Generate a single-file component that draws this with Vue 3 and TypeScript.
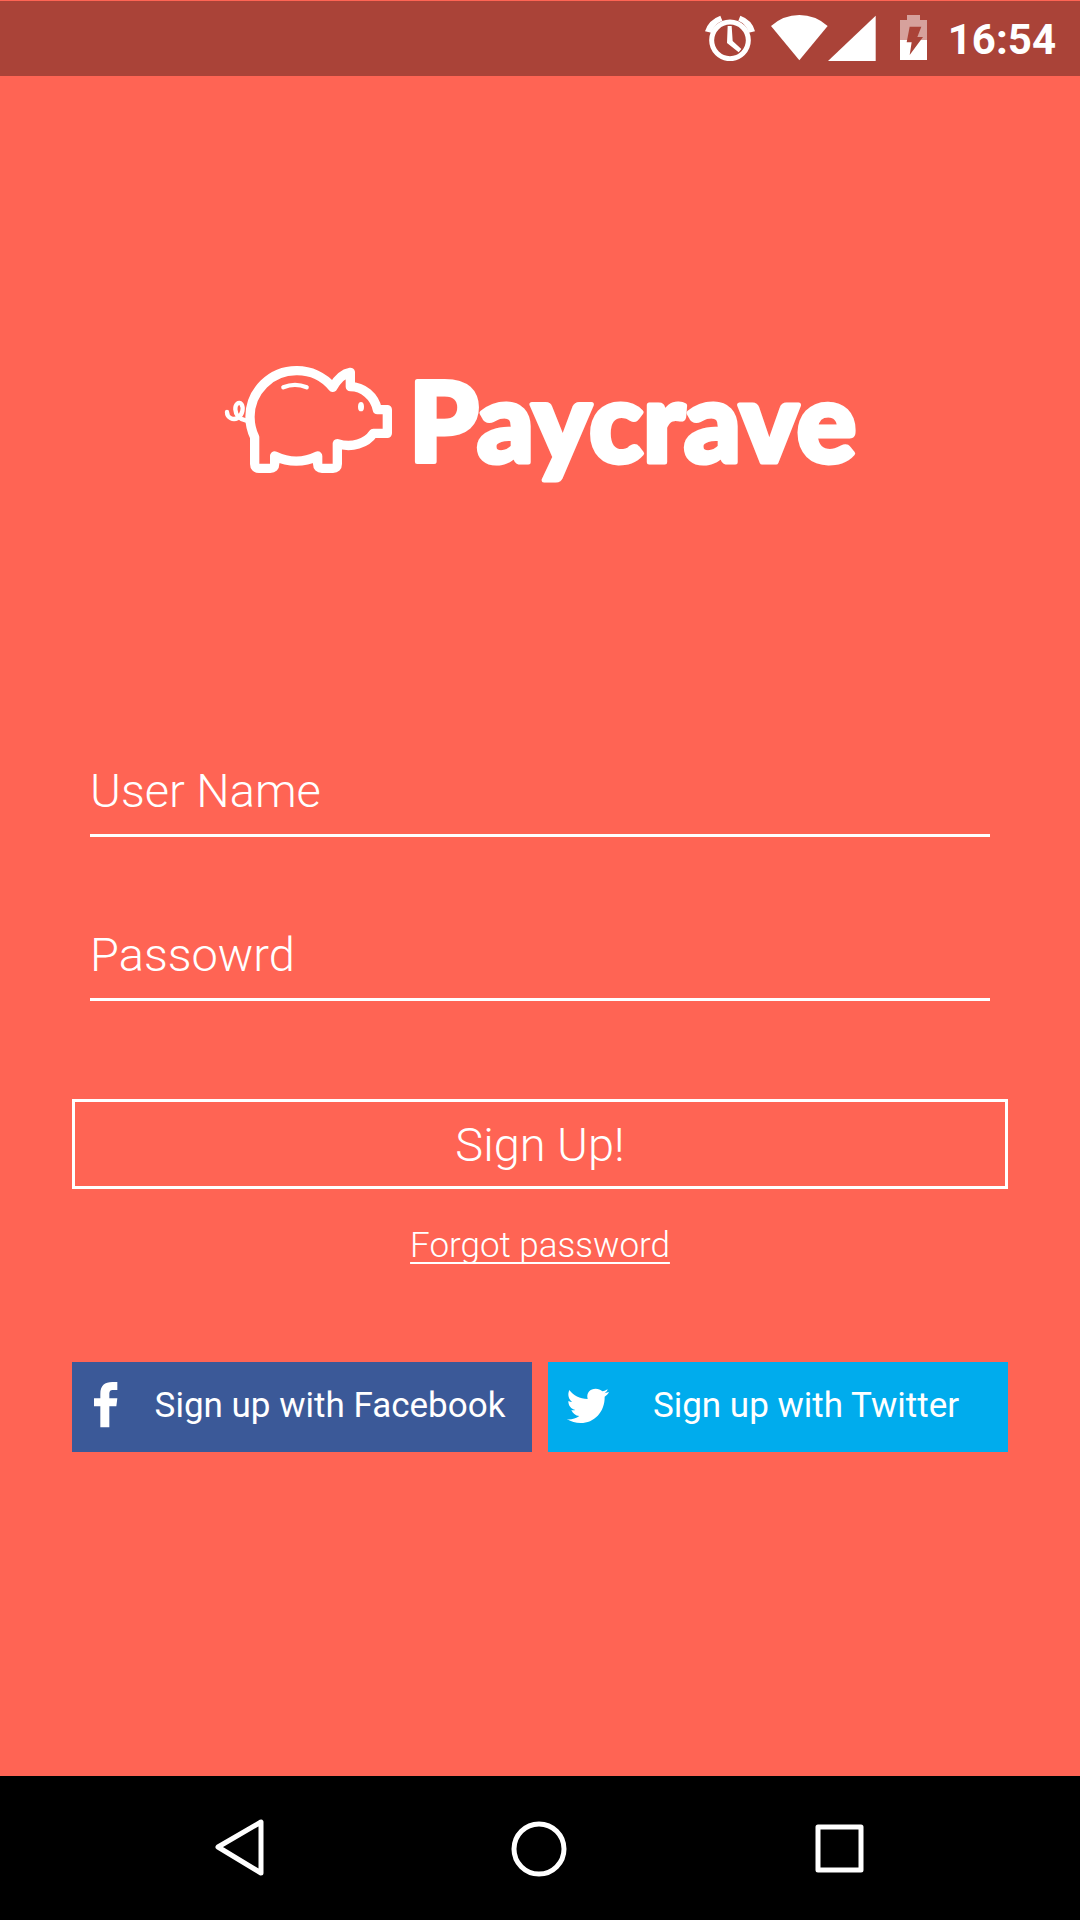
<script setup lang="ts">
import { ref } from 'vue'

const userName = ref('')
const password = ref('')
</script>

<template>
  <div class="screen">
    <header class="status">
      <svg class="alarm" width="50" height="46" viewBox="0 0 150 138" aria-hidden="true">
        <circle cx="75" cy="76" r="55" fill="none" stroke="#fff" stroke-width="15" />
        <path d="M68 33H80L83 78L109 102L101 112L66 84Z" fill="#fff" />
        <path d="M46 2L52 17Q28 27 19 53L0 49Q10 15 46 2ZM106 2L100 17Q124 27 131 53L150 49Q142 15 106 2Z" fill="#fff" />
      </svg>
      <svg class="wifi" width="57" height="46" viewBox="0 0 171 138" aria-hidden="true">
        <path d="M0 33Q37 0 85 0T170 33L85 136Z" fill="#fff" />
      </svg>
      <svg class="signal" width="48" height="46" viewBox="0 0 144 138" aria-hidden="true">
        <path d="M143 2V138H0Z" fill="#fff" />
      </svg>
      <svg class="battery" width="27" height="46" viewBox="0 0 81 138" aria-hidden="true">
        <path d="M0 15H21V0H60V15H81V75H0Z" fill="#d6a19c" />
        <path d="M0 75H81V135H0Z" fill="#fff" />
        <path d="M29 35H64L52 66H69L29 120L35 82H20Z" fill="#aa4338" />
      </svg>
      <time class="clock">16:54</time>
    </header>

    <main class="content">
      <h1 class="brand">
        <svg class="logo" viewBox="0 0 650 150" role="img" aria-label="Paycrave">
          <g transform="scale(.33333)" fill="none" stroke="#fff" stroke-linecap="round" stroke-linejoin="round">
            <path
              stroke-width="28"
              d="M119 262A139 139 0 0 1 105 200A139 139 0 0 1 244 62A139 139 0 0 1 353 112Q376 72 406 67V110C444 110 479 139 487 179H517V250H475C455 280 410 295 367 281V342Q367 355 354 355H321Q308 355 308 342V318Q244 349 179 318V342Q179 355 166 355H132Q119 355 119 342Z"
            />
            <path stroke-width="13" d="M205 112Q240 97 275 112" />
            <path stroke-width="13" d="M36 186C36 203 54 212 68 204C84 194 86 172 79 162C72 153 60 162 61 178C62 198 76 208 94 212" />
            <ellipse cx="438" cy="170" rx="9" ry="14" fill="#fff" stroke="none" />
          </g>
          <text class="wordmark" x="194" y="112">Paycrave</text>
        </svg>
      </h1>

      <form class="form" @submit.prevent>
        <input v-model="userName" class="field" type="text" placeholder="User Name" aria-label="User Name" />
        <input v-model="password" class="field" type="password" placeholder="Passowrd" aria-label="Password" />
        <button class="submit" type="submit">Sign Up!</button>
      </form>

      <a class="forgot" href="#">Forgot password</a>

      <div class="social">
        <button class="provider facebook" type="button">
          <svg width="42" height="48" viewBox="3 0 126 144" aria-hidden="true">
            <path d="M31 139V76H12V52H31V39C31 14 44 3 67 3H82V27H70C60 27 58 31 58 40V52H82L79 76H58V139Z" fill="#fff" />
          </svg>
          <span>Sign up with Facebook</span>
        </button>
        <button class="provider twitter" type="button">
          <svg width="42" height="38" viewBox="0 -6 126 114" aria-hidden="true">
            <path
              d="M7 6C20 23 37 32 62 33C57 13 70 2 86 2C94 2 101 5 106 10C112 9 118 6 122 4C121 9 117 13 112 16L126 12C123 18 118 23 113 26C114 72 81 105 41 105C26 105 12 101 0 94C14 95 27 91 37 84C25 83 17 76 13 66C17 67 21 67 25 66C12 63 4 53 4 39C8 41 12 42 16 42C4 34 1 19 7 6Z"
              fill="#fff"
            />
          </svg>
          <span>Sign up with Twitter</span>
        </button>
      </div>
    </main>

    <nav class="navbar" aria-label="System">
      <button type="button" aria-label="Back">
        <svg width="60" height="60" viewBox="0 0 60 60"><path d="M51 4V55L8 29Z" /></svg>
      </button>
      <button type="button" aria-label="Home">
        <svg width="60" height="60" viewBox="0 0 60 60"><circle cx="29" cy="31" r="25" /></svg>
      </button>
      <button type="button" aria-label="Recent apps">
        <svg width="60" height="60" viewBox="0 0 60 60"><rect x="8" y="9" width="43" height="43" /></svg>
      </button>
    </nav>
  </div>
</template>

<style>
body {
  background: #ff6454;
}
</style>

<style scoped>
.screen {
  display: flex;
  flex-direction: column;
  min-height: 100vh;
  background: #ff6454;
  color: #fff;
  font-family: Roboto, "Liberation Sans", sans-serif;
}

button,
input {
  margin: 0;
  padding: 0;
  border: 0;
  border-radius: 0;
  background: none;
  color: inherit;
  font: inherit;
}

.status {
  display: flex;
  justify-content: flex-end;
  align-items: flex-start;
  box-sizing: border-box;
  height: 76px;
  padding: 14px 24px 0 0;
  border-top: 1px solid #ff6454;
  background: #aa4338;
}

.wifi {
  margin-left: 16px;
}

.battery {
  margin: 0 21px 0 24px;
}

.clock {
  font-size: 42px;
  font-weight: 700;
  line-height: 50px;
}

.content {
  display: flex;
  flex: 1;
  flex-direction: column;
  align-items: center;
  padding: 274px 72px 80px;
}

.brand {
  width: 100%;
  max-width: 650px;
  margin: 0;
}

.logo {
  display: block;
  width: 100%;
}

.wordmark {
  fill: #fff;
  stroke: #fff;
  stroke-width: 5px;
  stroke-linejoin: round;
  font-family: Lato, "Open Sans", sans-serif;
  font-size: 111px;
  font-weight: 900;
}

.form {
  display: flex;
  flex-direction: column;
  align-self: stretch;
  margin-top: 245px;
}

.field {
  height: 92px;
  margin: 0 18px 72px;
  padding-top: 2px;
  border-bottom: 3px solid #fff;
  box-sizing: border-box;
  outline: none;
  font-size: 47px;
  font-weight: 300;
}

.field::placeholder {
  color: #fff;
  opacity: 1;
}

.submit {
  height: 90px;
  margin-top: 26px;
  border: 3px solid #fff;
  font-size: 47px;
  font-weight: 300;
}

.forgot {
  margin-top: 36px;
  color: inherit;
  font-size: 35px;
  font-weight: 300;
  line-height: 42px;
  text-decoration-thickness: 2px;
  text-decoration-skip-ink: none;
  text-underline-offset: 5px;
}

.social {
  display: flex;
  align-self: stretch;
  gap: 16px;
  margin-top: 95px;
}

.provider {
  display: flex;
  flex: 1;
  align-items: center;
  height: 90px;
  padding: 0 5px 4px 19px;
  font-size: 35px;
}

.provider span {
  flex: 1;
}

.facebook {
  background: #3b5998;
}

.twitter {
  background: #00aced;
}

.navbar {
  display: grid;
  grid-template-columns: repeat(3, 1fr);
  height: 144px;
  padding: 0 90px;
  background: #000;
}

.navbar svg {
  display: block;
  margin: auto;
  fill: none;
  stroke: #fff;
  stroke-width: 5px;
  stroke-linejoin: round;
}
</style>
